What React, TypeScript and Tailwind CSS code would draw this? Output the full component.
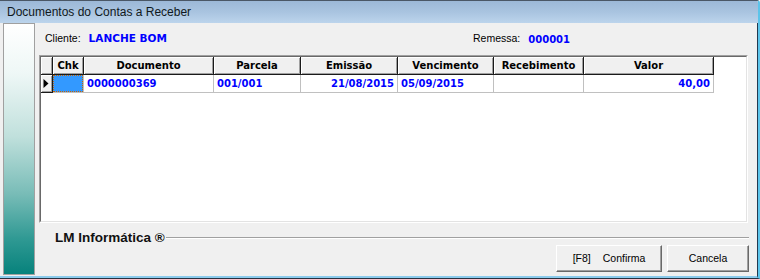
const cols = [
  { key: "chk", label: "Chk", w: "w-[31px]", align: "left" },
  { key: "doc", label: "Documento", w: "w-[130px]", align: "left" },
  { key: "parc", label: "Parcela", w: "w-[87px]", align: "left" },
  { key: "emi", label: "Emissão", w: "w-[97px]", align: "right" },
  { key: "venc", label: "Vencimento", w: "w-[96px]", align: "left" },
  { key: "rec", label: "Recebimento", w: "w-[90px]", align: "left" },
  { key: "valor", label: "Valor", w: "w-[130px]", align: "right" },
];

const row: Record<string, string> = {
  chk: "",
  doc: "0000000369",
  parc: "001/001",
  emi: "21/08/2015",
  venc: "05/09/2015",
  rec: "",
  valor: "40,00",
};

const raised =
  "bg-[#f0f0f0] border-r border-b border-[#1a1a1a] shadow-[inset_1px_1px_0_#ffffff,inset_-1px_-1px_0_#a0a0a0]";

function Grid() {
  return (
    <div className="ml-[4px] w-[709px] h-[168px] border-t border-l border-[#a0a0a0] border-r border-b border-r-white border-b-white">
      <div className="w-full h-full bg-white border-t border-l border-[#696969] border-r border-b border-r-[#e3e3e3] border-b-[#e3e3e3] font-['DejaVu_Sans',sans-serif] text-[10px] font-bold">
        {/* header */}
        <div className="flex">
          <div className={`w-[12px] h-[18px] ${raised}`} />
          {cols.map((c) => (
            <div key={c.key} className={`${c.w} h-[18px] flex items-center justify-center text-black ${raised}`}>
              {c.label}
            </div>
          ))}
        </div>
        {/* data row */}
        <div className="flex">
          <div className={`w-[12px] h-[18px] flex items-center justify-center pr-[1px] ${raised}`}>
            <svg width="6" height="9" viewBox="0 0 6 9">
              <path d="M0.5 0 L5.5 4.5 L0.5 9 Z" fill="#000" />
            </svg>
          </div>
          {cols.map((c) =>
            c.key === "chk" ? (
              <div key={c.key} className={`${c.w} h-[18px] border-r border-b border-[#c0c0c0]`}>
                <div className="w-full h-full bg-[#3399ff] border border-dotted border-[#c86400]" />
              </div>
            ) : (
              <div
                key={c.key}
                className={`${c.w} h-[18px] flex items-center border-r border-b border-[#c0c0c0] text-[#0000ff] ${
                  c.align === "right" ? "justify-end pr-[3px]" : "justify-start pl-[3px]"
                }`}
              >
                {row[c.key]}
              </div>
            )
          )}
        </div>
      </div>
    </div>
  );
}

function Button({ children, w }: { children: React.ReactNode; w: string }) {
  return (
    <button
      className={`${w} h-[27px] flex items-center justify-center gap-[12px] bg-[#f0f0f0] border-t border-l border-white border-r border-b border-r-[#696969] border-b-[#696969] shadow-[inset_-1px_-1px_0_#a0a0a0] text-[10.5px] text-black`}
    >
      {children}
    </button>
  );
}

export default function App() {
  return (
    <div className="w-[760px] h-[279px] flex flex-col overflow-hidden bg-[#f0f0f0] border-t border-[#4a5766] border-r-2 border-r-[#5cc4ea] border-b border-b-[#263240] rounded-tr-[3px] font-['Liberation_Sans',Arial,sans-serif]">
      {/* Title bar */}
      <div className="h-[22px] flex items-center pl-[7px] bg-[linear-gradient(180deg,#9cb8d7_0%,#a9c4e0_50%,#bcd4ec_100%)] text-[12px] text-[#101820]">
        Documentos do Contas a Receber
      </div>

      {/* Body */}
      <div className="flex-1 flex pl-[3px] pb-[1px] border-r border-[#22384f] border-b-2 border-b-[#8ccbec]">
        {/* side band */}
        <div className="w-[32px] h-[252px] border border-[#a0a0a0] bg-[linear-gradient(180deg,#ffffff_0%,#eef7f6_20%,#c0e0dc_45%,#78bcb7_68%,#2f9993_86%,#07827c_100%)]" />

        <div className="flex-1 flex flex-col">
          {/* Cliente / Remessa */}
          <div className="h-[32px] flex items-center pl-[10px] text-[10.5px] text-black">
            <div className="w-[428px] flex items-center gap-[8px]">
              <span>Cliente:</span>
              <span className="font-['DejaVu_Sans',sans-serif] font-bold text-[10.5px] text-[#0000ff]">LANCHE BOM</span>
            </div>
            <div className="flex items-center gap-[8px]">
              <span>Remessa:</span>
              <span className="font-['DejaVu_Sans',sans-serif] font-bold text-[10px] text-[#0000ff]">000001</span>
            </div>
          </div>

          <Grid />

          {/* LM Informática group line */}
          <div className="mt-[8px] h-[14px] flex items-center pl-[20px] mr-[8px]">
            <span className="font-bold text-[13.5px] text-[#111] leading-none">LM Informática ®</span>
            <div className="flex-1 ml-[1px] border-t border-[#a0a0a0] border-b border-b-white" />
          </div>

          {/* Buttons */}
          <div className="h-[27px] flex justify-end gap-[5px] pr-[8px]">
            <Button w="w-[106px]">
              <span>[F8]</span>
              <span>Confirma</span>
            </Button>
            <Button w="w-[82px]">Cancela</Button>
          </div>
        </div>
      </div>
    </div>
  );
}
